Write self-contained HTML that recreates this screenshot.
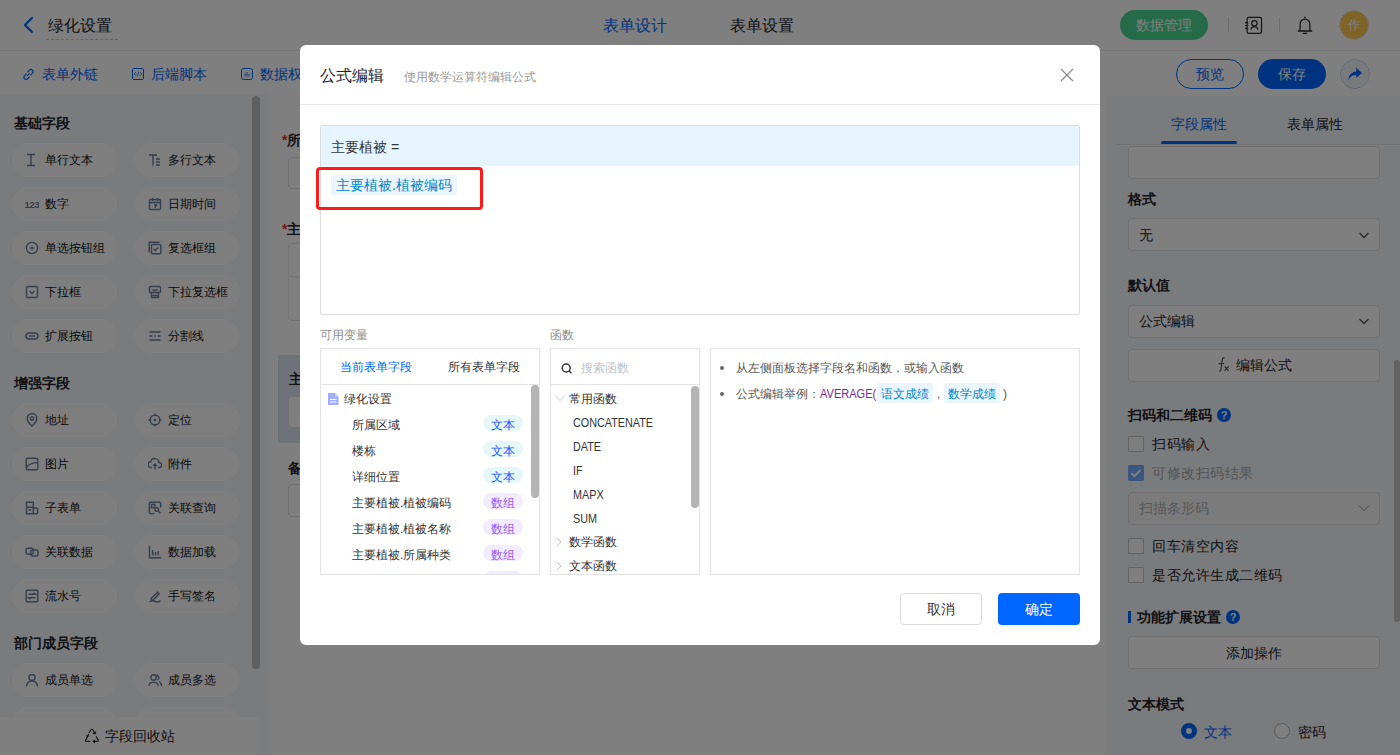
<!DOCTYPE html>
<html><head><meta charset="utf-8">
<style>
*{box-sizing:border-box;margin:0;padding:0}
html,body{width:1400px;height:755px;overflow:hidden}
body{position:relative;font-family:"Liberation Sans",sans-serif;color:#1f2329;background:#fff}
.a{position:absolute}
.t{position:absolute;white-space:nowrap;line-height:20px}
svg{display:block}
/* page */
#hdr{left:0;top:0;width:1400px;height:51px;background:#fff;border-bottom:1px solid #e8e8e8}
#tb{left:0;top:51px;width:1400px;height:44px;background:#fff}
#side{left:0;top:95px;width:268px;height:660px;background:#f5f7fb}
.sec{position:absolute;left:14px;font-size:14px;font-weight:bold;line-height:20px;color:#1f2329}
.pill{position:absolute;width:105px;height:34px;border-radius:17px;background:#fdfdfd}
.pill .ic{position:absolute;left:16px;top:11px;width:12px;height:12px}
.pill span{position:absolute;left:33px;top:8px;font-size:12px;line-height:18px;color:#111;white-space:nowrap}
#canvas{left:268px;top:95px;width:838px;height:660px;background:#fff}
#rp{left:1106px;top:96px;width:294px;height:659px;background:#f5f7fb}
.inp{position:absolute;left:1128px;width:252px;border:1px solid #e0e0e0;border-radius:4px;background:#fff}
.lbl{position:absolute;left:1128px;font-size:14px;font-weight:bold;line-height:20px;white-space:nowrap}
.cb{position:absolute;left:1128px;width:16px;height:16px;border:1px solid #c4c4c4;border-radius:1px;background:#fff}
.cbt{position:absolute;left:1152px;font-size:14px;line-height:20px;white-space:nowrap;letter-spacing:0.5px}
#mask{left:0;top:0;width:1400px;height:755px;background:rgba(0,0,0,0.5)}
/* modal */
#modal{left:300px;top:45px;width:800px;height:600px;background:#fff;border-radius:6px}
.tag{width:40px;height:16px;border-radius:8px;font-size:12px;line-height:20px;text-align:center;white-space:nowrap}
.fn{font-size:12px;color:#333;transform:scaleX(0.9);transform-origin:0 0}
</style></head><body>

<!-- header -->
<div id="hdr" class="a"></div>
<svg class="a" style="left:20px;top:15px" width="16" height="20" viewBox="0 0 16 20"><polyline points="12,3 5,10 12,17" fill="none" stroke="#0066ff" stroke-width="2.2" stroke-linecap="round" stroke-linejoin="round"/></svg>
<div class="t" style="left:48px;top:16px;font-size:16px">绿化设置</div>
<div class="a" style="left:46px;top:39px;width:72px;height:0;border-top:1px dashed #c9c9c9"></div>
<div class="t" style="left:603px;top:16px;font-size:16px;color:#0066ff">表单设计</div>
<div class="t" style="left:730px;top:16px;font-size:16px">表单设置</div>
<div class="a" style="left:1120px;top:10px;width:88px;height:30px;border-radius:15px;background:#4ad692"></div>
<div class="t" style="left:1136px;top:15px;font-size:14px;color:#fff">数据管理</div>
<div class="a" style="left:1228px;top:18px;width:1px;height:14px;background:#dcdcdc"></div>
<svg class="a" style="left:1243px;top:15px" width="20" height="20" viewBox="0 0 20 20"><rect x="4.1" y="2.4" width="14.4" height="16" rx="1.6" fill="none" stroke="#2a2a2a" stroke-width="1.25"/><circle cx="11.4" cy="8.3" r="2.7" fill="none" stroke="#2a2a2a" stroke-width="1.25"/><path d="M7.9 14.6a3.6 3.6 0 0 1 7.1 0" fill="none" stroke="#2a2a2a" stroke-width="1.25"/><path d="M1.9 7.6h3.4M1.9 10.5h3.4M1.9 13.3h3.4" stroke="#2a2a2a" stroke-width="1.1"/></svg>
<div class="a" style="left:1279px;top:18px;width:1px;height:14px;background:#dcdcdc"></div>
<svg class="a" style="left:1295px;top:15px" width="20" height="20" viewBox="0 0 20 20"><path d="M4.6 16c.4-.6.5-1.4.5-2.4V8.9a4.9 4.9 0 0 1 9.8 0v4.7c0 1 .1 1.8.5 2.4" fill="none" stroke="#2a2a2a" stroke-width="1.25"/><path d="M3.3 16h13.4" stroke="#2a2a2a" stroke-width="1.4" stroke-linecap="round"/><path d="M8.4 18.4h3.2" stroke="#2a2a2a" stroke-width="1.3" stroke-linecap="round"/><circle cx="10" cy="2.6" r="0.9" fill="#2a2a2a"/></svg>
<div class="a" style="left:1339px;top:10px;width:30px;height:30px;border-radius:15px;background:#fcc84c;border:1px solid #e6e9f4"></div>
<div class="t" style="left:1348px;top:15px;font-size:12px;color:#fff">作</div>

<!-- toolbar -->
<div id="tb" class="a"></div>
<svg class="a" style="left:22px;top:68px" width="13" height="13" viewBox="0 0 13 13"><path d="M5.6 7.4l1.8-1.8M4.2 6.2L2.6 7.8a2.1 2.1 0 0 0 3 3l1.6-1.6M8.8 6.8l1.6-1.6a2.1 2.1 0 0 0-3-3L5.8 3.8" fill="none" stroke="#0066ff" stroke-width="1.2" stroke-linecap="round"/></svg>
<div class="t" style="left:42px;top:64px;font-size:14px;color:#0066ff">表单外链</div>
<svg class="a" style="left:132px;top:68px" width="12" height="12" viewBox="0 0 12 12"><rect x="0.5" y="0.5" width="11" height="11" rx="1.3" fill="none" stroke="#0066ff" stroke-width="1"/><path d="M3.8 4.2L2.3 6l1.5 1.8M8.2 4.2L9.7 6 8.2 7.8M6.8 3.6L5.2 8.4" fill="none" stroke="#0066ff" stroke-width="0.8"/></svg>
<div class="t" style="left:151px;top:64px;font-size:14px;color:#0066ff">后端脚本</div>
<svg class="a" style="left:241px;top:68px" width="12" height="12" viewBox="0 0 12 12"><rect x="0.5" y="0.5" width="11" height="11" rx="2" fill="none" stroke="#0066ff" stroke-width="1"/><path d="M4 5.5v3M6 4v4.5M8 6v2.5" stroke="#0066ff" stroke-width="0.9"/></svg>
<div class="t" style="left:260px;top:64px;font-size:14px;color:#0066ff">数据权限</div>
<div class="a" style="left:1176px;top:59px;width:68px;height:30px;border-radius:15px;border:1px solid #0066ff;background:#fff"></div>
<div class="t" style="left:1196px;top:64px;font-size:14px;color:#0066ff">预览</div>
<div class="a" style="left:1258px;top:59px;width:68px;height:30px;border-radius:15px;background:#0066ff"></div>
<div class="t" style="left:1278px;top:64px;font-size:14px;color:#fff">保存</div>
<div class="a" style="left:1340px;top:59px;width:30px;height:30px;border-radius:15px;border:1px solid #c9d5ee;background:#f2f5fc"></div>
<svg class="a" style="left:1347px;top:66px" width="16" height="16" viewBox="0 0 16 16"><path d="M9.2 1.8l5.8 5.2-5.8 5.1V9.1C5.6 9.1 3.2 10.5 1.2 14.2c0.5-4.8 3.1-8.3 8-8.8z" fill="#0066ff"/></svg>

<div id="side" class="a"></div>
<div class="sec" style="top:113px">基础字段</div>
<div class="sec" style="top:373px">增强字段</div>
<div class="sec" style="top:633px">部门成员字段</div>
<div class="pill" style="left:12px;top:143px"><svg class="ic" style="left:13px;top:10px;width:14px;height:14px" viewBox="0 0 14 14"><path d="M2 1.5h8M2 12.5h8M6 1.5v11" stroke="#6c7a9a" stroke-width="1.4" fill="none"/></svg><span>单行文本</span></div>
<div class="pill" style="left:135px;top:143px"><svg class="ic" style="left:13px;top:10px;width:14px;height:14px" viewBox="0 0 14 14"><path d="M1 2h8M5 2v10.5M8 6h4M8 9h4M8 12h4" stroke="#6c7a9a" stroke-width="1.4" fill="none"/></svg><span>多行文本</span></div>
<div class="pill" style="left:12px;top:187px"><svg class="ic" style="left:13px;top:10px;width:14px;height:14px" viewBox="0 0 14 14"><text x="-0.5" y="10.5" font-size="9.5" font-weight="bold" fill="#6c7a9a" font-family="Liberation Sans" letter-spacing="-0.3">123</text></svg><span>数字</span></div>
<div class="pill" style="left:135px;top:187px"><svg class="ic" style="left:13px;top:10px;width:14px;height:14px" viewBox="0 0 14 14"><rect x="1.5" y="2.5" width="11" height="10" rx="1" stroke="#6c7a9a" stroke-width="1.4" fill="none"/><path d="M1.5 5.5h11M4.5 1v3M9.5 1v3M6 8h2.5L7 11" stroke="#6c7a9a" stroke-width="1.4" fill="none"/></svg><span>日期时间</span></div>
<div class="pill" style="left:12px;top:231px"><svg class="ic" style="left:13px;top:10px;width:14px;height:14px" viewBox="0 0 14 14"><circle cx="7" cy="7" r="5.6" stroke="#6c7a9a" stroke-width="1.4" fill="none"/><circle cx="7" cy="7" r="1.6" fill="#6c7a9a"/></svg><span>单选按钮组</span></div>
<div class="pill" style="left:135px;top:231px"><svg class="ic" style="left:13px;top:10px;width:14px;height:14px" viewBox="0 0 14 14"><path d="M1.2 11.5V1.2h10.3" stroke="#6c7a9a" stroke-width="1.4" fill="none"/><rect x="3.5" y="3.5" width="9.3" height="9.3" rx="1" stroke="#6c7a9a" stroke-width="1.4" fill="none"/><path d="M5.6 8l1.6 1.6 3-3.2" stroke="#6c7a9a" stroke-width="1.4" fill="none"/></svg><span>复选框组</span></div>
<div class="pill" style="left:12px;top:275px"><svg class="ic" style="left:13px;top:10px;width:14px;height:14px" viewBox="0 0 14 14"><rect x="1.5" y="1.5" width="11" height="11" rx="1" stroke="#6c7a9a" stroke-width="1.4" fill="none"/><path d="M4.5 6l2.5 2.5L9.5 6" stroke="#6c7a9a" stroke-width="1.4" fill="none"/></svg><span>下拉框</span></div>
<div class="pill" style="left:135px;top:275px"><svg class="ic" style="left:13px;top:10px;width:14px;height:14px" viewBox="0 0 14 14"><rect x="1.5" y="1.5" width="11" height="6" rx="1" stroke="#6c7a9a" stroke-width="1.4" fill="none"/><path d="M3 10.5h8M4.5 4.5l2.5 1.2 2.5-1.2M3.5 7.5v5h7v-5" stroke="#6c7a9a" stroke-width="1.4" fill="none"/></svg><span>下拉复选框</span></div>
<div class="pill" style="left:12px;top:319px"><svg class="ic" style="left:13px;top:10px;width:14px;height:14px" viewBox="0 0 14 14"><rect x="1" y="4" width="12" height="6" rx="3" stroke="#6c7a9a" stroke-width="1.4" fill="none"/><path d="M4 7h6" stroke="#6c7a9a" stroke-width="1.4" fill="none"/></svg><span>扩展按钮</span></div>
<div class="pill" style="left:135px;top:319px"><svg class="ic" style="left:13px;top:10px;width:14px;height:14px" viewBox="0 0 14 14"><path d="M1.5 3h11M1.5 7h3M6 7h2M9.5 7h3M1.5 11h11" stroke="#6c7a9a" stroke-width="1.4" fill="none"/></svg><span>分割线</span></div>
<div class="pill" style="left:12px;top:403px"><svg class="ic" style="left:13px;top:10px;width:14px;height:14px" viewBox="0 0 14 14"><path d="M7 13s-4.8-4.3-4.8-7.6a4.8 4.8 0 0 1 9.6 0C11.8 8.7 7 13 7 13z" stroke="#6c7a9a" stroke-width="1.4" fill="none"/><circle cx="7" cy="5.6" r="1.7" stroke="#6c7a9a" stroke-width="1.4" fill="none"/></svg><span>地址</span></div>
<div class="pill" style="left:135px;top:403px"><svg class="ic" style="left:13px;top:10px;width:14px;height:14px" viewBox="0 0 14 14"><circle cx="7" cy="7" r="4.8" stroke="#6c7a9a" stroke-width="1.4" fill="none"/><circle cx="7" cy="7" r="1.3" fill="#6c7a9a"/><path d="M7 0.5v2.5M7 11v2.5M0.5 7H3M11 7h2.5" stroke="#6c7a9a" stroke-width="1.4" fill="none"/></svg><span>定位</span></div>
<div class="pill" style="left:12px;top:447px"><svg class="ic" style="left:13px;top:10px;width:14px;height:14px" viewBox="0 0 14 14"><rect x="1.2" y="1.2" width="11.6" height="11.6" rx="1.4" stroke="#6c7a9a" stroke-width="1.4" fill="none"/><path d="M1.4 10.2C4 7 6.6 5.6 12.6 5.6" stroke="#6c7a9a" stroke-width="1.4" fill="none"/></svg><span>图片</span></div>
<div class="pill" style="left:135px;top:447px"><svg class="ic" style="left:13px;top:10px;width:14px;height:14px" viewBox="0 0 14 14"><path d="M3.8 10.5H3a2.8 2.8 0 0 1-.3-5.6 4.2 4.2 0 0 1 8.3.6 2.5 2.5 0 0 1 .2 5H10M7 12.5V7.2M5 9l2-2 2 2" stroke="#6c7a9a" stroke-width="1.4" fill="none"/></svg><span>附件</span></div>
<div class="pill" style="left:12px;top:491px"><svg class="ic" style="left:13px;top:10px;width:14px;height:14px" viewBox="0 0 14 14"><path d="M1.5 1.2h6.8v11.6H1.5zM1.5 6.3h6.8M3.6 9h2.6M8.3 7h3.3a1 1 0 0 1 1 1v3.8a1 1 0 0 1-1 1H8.3" stroke="#6c7a9a" stroke-width="1.4" fill="none"/></svg><span>子表单</span></div>
<div class="pill" style="left:135px;top:491px"><svg class="ic" style="left:13px;top:10px;width:14px;height:14px" viewBox="0 0 14 14"><path d="M12.6 6.5V2.2a1 1 0 0 0-1-1H2.4a1 1 0 0 0-1 1v9.4a1 1 0 0 0 1 1h4" stroke="#6c7a9a" stroke-width="1.4" fill="none"/><rect x="3.6" y="3.4" width="3.2" height="3.2" stroke="#6c7a9a" stroke-width="1.4" fill="none"/><circle cx="8.8" cy="8.6" r="1.8" stroke="#6c7a9a" stroke-width="1.4" fill="none"/><path d="M10.1 9.9l2.4 2.4" stroke="#6c7a9a" stroke-width="1.4" fill="none"/></svg><span>关联查询</span></div>
<div class="pill" style="left:12px;top:535px"><svg class="ic" style="left:13px;top:10px;width:14px;height:14px" viewBox="0 0 14 14"><rect x="1" y="3.2" width="7.2" height="6" rx="1.6" stroke="#6c7a9a" stroke-width="1.4" fill="none"/><rect x="5.8" y="5" width="7.2" height="6" rx="1.6" stroke="#6c7a9a" stroke-width="1.4" fill="none"/></svg><span>关联数据</span></div>
<div class="pill" style="left:135px;top:535px"><svg class="ic" style="left:13px;top:10px;width:14px;height:14px" viewBox="0 0 14 14"><path d="M1.5 0.8v12h11.8M4.6 10.5V5M7.4 10.5V7M10.2 10.5V6" stroke="#6c7a9a" stroke-width="1.4" fill="none"/></svg><span>数据加载</span></div>
<div class="pill" style="left:12px;top:579px"><svg class="ic" style="left:13px;top:10px;width:14px;height:14px" viewBox="0 0 14 14"><rect x="1.2" y="1.2" width="11.6" height="11.6" rx="1" stroke="#6c7a9a" stroke-width="1.4" fill="none"/><path d="M3.6 5.3h6.8L8.6 3.8M10.4 8.7H3.6l1.8 1.5" stroke="#6c7a9a" stroke-width="1.4" fill="none"/></svg><span>流水号</span></div>
<div class="pill" style="left:135px;top:579px"><svg class="ic" style="left:13px;top:10px;width:14px;height:14px" viewBox="0 0 14 14"><path d="M3.2 9.6L9.6 3.2l1.6 1.6-6.4 6.4H3.2z" stroke="#6c7a9a" stroke-width="1.4" fill="none"/><path d="M1.5 13c2-1.4 3.8-1.6 5.6-.6 1.6.9 3.4.7 5.4-.6" stroke="#6c7a9a" stroke-width="1.4" fill="none"/></svg><span>手写签名</span></div>
<div class="pill" style="left:12px;top:663px"><svg class="ic" style="left:13px;top:10px;width:14px;height:14px" viewBox="0 0 14 14"><circle cx="7" cy="4.5" r="3" stroke="#6c7a9a" stroke-width="1.4" fill="none"/><path d="M1.5 13.5a5.5 5.5 0 0 1 11 0" stroke="#6c7a9a" stroke-width="1.4" fill="none"/></svg><span>成员单选</span></div>
<div class="pill" style="left:135px;top:663px"><svg class="ic" style="left:13px;top:10px;width:14px;height:14px" viewBox="0 0 14 14"><circle cx="5.5" cy="4.5" r="2.7" stroke="#6c7a9a" stroke-width="1.4" fill="none"/><path d="M0.8 13a4.8 4.8 0 0 1 9.4 0M8.5 2a2.7 2.7 0 0 1 1 5M11 8.5a4.8 4.8 0 0 1 2.4 4.5" stroke="#6c7a9a" stroke-width="1.4" fill="none"/></svg><span>成员多选</span></div>
<div class="pill" style="left:12px;top:707px"><svg class="ic" style="left:13px;top:10px;width:14px;height:14px" viewBox="0 0 14 14"></svg><span>成员部门</span></div>
<div class="pill" style="left:135px;top:707px"></div>
<div class="a" style="left:252px;top:96px;width:8px;height:573px;border-radius:4px;background:#bebebe"></div>
<div class="a" style="left:0;top:717px;width:260px;height:38px;background:#fff"></div>
<svg class="a" style="left:84px;top:728px" width="16" height="16" viewBox="0 0 16 16"><g fill="none" stroke="#222" stroke-width="1.15" stroke-linecap="round" stroke-linejoin="round"><path d="M5.1 4.6L7 1.8Q7.9 0.7 8.8 1.8L10.9 5.6M9.2 5.5l1.8.3.6-1.7"/><path d="M4 8.3L1.6 12Q1 13.4 2.4 13.4H5.9M2.5 7.9l1.6.3.4-1.7"/><path d="M9.2 13.4H13.4Q14.8 13.4 14.2 12L12.2 8.7M10.5 12.1L9.2 13.4l1.3 1.3"/></g></svg>
<div class="t" style="left:105px;top:726px;font-size:14px">字段回收站</div>
<div id="canvas" class="a"></div>
<div class="t" style="left:282px;top:130px;font-size:14px;font-weight:bold"><span style="color:#e03030">*</span>所属区域</div>
<div class="a" style="left:288px;top:157px;width:300px;height:32px;border:1px solid #e0e0e0;border-radius:4px"></div>
<div class="t" style="left:282px;top:219px;font-size:14px;font-weight:bold"><span style="color:#e03030">*</span>主要植被</div>
<div class="a" style="left:288px;top:243px;width:300px;height:78px;border:1px solid #e8e8e8;border-radius:4px"></div>
<div class="a" style="left:288px;top:276px;width:300px;height:1px;background:#e8e8e8"></div>
<div class="a" style="left:278px;top:355px;width:400px;height:88px;background:#dfe6f3"></div>
<div class="t" style="left:289px;top:369px;font-size:14px;font-weight:bold">主要植被</div>
<div class="a" style="left:288px;top:396px;width:300px;height:32px;border:1px solid #e0e0e0;border-radius:4px;background:#fff"></div>
<div class="t" style="left:288px;top:458px;font-size:14px;font-weight:bold">备注</div>
<div class="a" style="left:288px;top:484px;width:300px;height:33px;border:1px solid #e0e0e0;border-radius:4px"></div>

<div id="rp" class="a"></div>
<div class="t" style="left:1171px;top:114px;font-size:14px;color:#0066ff">字段属性</div>
<div class="t" style="left:1287px;top:114px;font-size:14px">表单属性</div>
<div class="a" style="left:1114px;top:144px;width:286px;height:1px;background:#e4e4e4"></div>
<div class="a" style="left:1161px;top:141px;width:76px;height:3px;border-radius:1.5px;background:#0066ff"></div>
<div class="inp" style="top:146px;height:33px"></div>
<div class="lbl" style="top:189px">格式</div>
<div class="inp" style="top:218px;height:33px"></div>
<div class="t" style="left:1139px;top:225px;font-size:14px">无</div>
<svg class="a" style="left:1358px;top:229px" width="12" height="12" viewBox="0 0 12 12"><path d="M1.5 4l4.5 4.5L10.5 4" fill="none" stroke="#555" stroke-width="1.3"/></svg>
<div class="lbl" style="top:275px">默认值</div>
<div class="inp" style="top:305px;height:33px"></div>
<div class="t" style="left:1139px;top:311px;font-size:14px">公式编辑</div>
<svg class="a" style="left:1358px;top:315px" width="12" height="12" viewBox="0 0 12 12"><path d="M1.5 4l4.5 4.5L10.5 4" fill="none" stroke="#555" stroke-width="1.3"/></svg>
<div class="inp" style="top:349px;height:33px"></div>
<svg class="a" style="left:1216px;top:356px" width="16" height="17" viewBox="0 0 16 17"><path d="M8.6 2.2c-.6-.5-1.5-.4-1.9.4-.4.8-.6 2-.9 4.2L4.9 13.6c-.3 1.3-.8 1.7-1.6 1.5" fill="none" stroke="#4a4a4a" stroke-width="1.1"/><path d="M2.5 7.6h5.6" stroke="#4a4a4a" stroke-width="1"/><path d="M8.6 10.3l4 4.6M12.6 10.3l-4 4.6" stroke="#4a4a4a" stroke-width="1.1"/></svg>
<div class="t" style="left:1236px;top:355px;font-size:14px">编辑公式</div>
<div class="lbl" style="top:405px">扫码和二维码</div>
<div class="a" style="left:1217px;top:408px;width:14px;height:14px;border-radius:7px;background:#0066ff;color:#fff;font-size:11px;font-weight:bold;line-height:14px;text-align:center">?</div>
<div class="cb" style="top:436px"></div>
<div class="cbt" style="top:434px">扫码输入</div>
<div class="cb" style="top:465px;background:#74b0ff;border-color:#74b0ff"></div>
<svg class="a" style="left:1128px;top:465px" width="16" height="16" viewBox="0 0 16 16"><path d="M3.4 8.2l3 3 6-6.2" fill="none" stroke="#fff" stroke-width="2"/></svg>
<div class="cbt" style="top:463px;color:#a8a8a8">可修改扫码结果</div>
<div class="inp" style="top:492px;height:33px;background:#f7f7f8"></div>
<div class="t" style="left:1139px;top:498px;font-size:14px;color:#b0b0b0">扫描条形码</div>
<svg class="a" style="left:1358px;top:502px" width="12" height="12" viewBox="0 0 12 12"><path d="M1.5 4l4.5 4.5L10.5 4" fill="none" stroke="#bbb" stroke-width="1.3"/></svg>
<div class="cb" style="top:538px"></div>
<div class="cbt" style="top:536px">回车清空内容</div>
<div class="cb" style="top:567px"></div>
<div class="cbt" style="top:565px">是否允许生成二维码</div>
<div class="a" style="left:1128px;top:611px;width:3px;height:12px;background:#0066ff"></div>
<div class="lbl" style="left:1137px;top:607px">功能扩展设置</div>
<div class="a" style="left:1226px;top:610px;width:14px;height:14px;border-radius:7px;background:#0066ff;color:#fff;font-size:11px;font-weight:bold;line-height:14px;text-align:center">?</div>
<div class="inp" style="top:636px;height:33px"></div>
<div class="t" style="left:1226px;top:643px;font-size:14px">添加操作</div>
<div class="lbl" style="top:694px">文本模式</div>
<div class="a" style="left:1181px;top:723px;width:16px;height:16px;border-radius:8px;border:5px solid #0066ff;background:#fff"></div>
<div class="t" style="left:1204px;top:722px;font-size:14px;color:#0066ff">文本</div>
<div class="a" style="left:1274px;top:723px;width:16px;height:16px;border-radius:8px;border:1px solid #b8b8b8;background:#fff"></div>
<div class="t" style="left:1298px;top:722px;font-size:14px">密码</div>
<div class="a" style="left:1394px;top:360px;width:6px;height:262px;border-radius:3px;background:#c6c6c6"></div>


<div id="mask" class="a"></div>
<div id="modal" class="a"></div>
<div class="t" style="left:320px;top:66px;font-size:16px">公式编辑</div>
<div class="t" style="left:404px;top:67px;font-size:12px;color:#999">使用数学运算符编辑公式</div>
<svg class="a" style="left:1060px;top:68px" width="14" height="14" viewBox="0 0 14 14"><path d="M1 1l12 12M13 1L1 13" stroke="#888" stroke-width="1.2"/></svg>
<div class="a" style="left:300px;top:104px;width:800px;height:1px;background:#e8e8e8"></div>
<div class="a" style="left:320px;top:125px;width:760px;height:190px;border:1px solid #dcdcdc;border-radius:2px"></div>
<div class="a" style="left:321px;top:126px;width:758px;height:40px;background:#e6f4ff"></div>
<div class="t" style="left:331px;top:137px;font-size:14px;color:#333">主要植被 =</div>
<div class="a" style="left:331px;top:175px;width:126px;height:20px;border-radius:2px;background:#eaf5fd"></div>
<div class="t" style="left:336px;top:175px;font-size:14px;color:#0088cc">主要植被.植被编码</div>
<div class="a" style="left:316px;top:167px;width:167px;height:43px;border:3px solid #ff1a1a;border-radius:4px"></div>
<div class="t" style="left:320px;top:325px;font-size:12px;color:#8c8c8c">可用变量</div>
<div class="t" style="left:550px;top:325px;font-size:12px;color:#8c8c8c">函数</div>
<div class="a" style="left:320px;top:348px;width:220px;height:227px;border:1px solid #e3e3e3;overflow:hidden"></div>
<div class="t" style="left:340px;top:357px;font-size:12px;color:#0066ff">当前表单字段</div>
<div class="t" style="left:448px;top:357px;font-size:12px;color:#333">所有表单字段</div>
<div class="a" style="left:321px;top:384px;width:218px;height:1px;background:#e3e3e3"></div>
<svg class="a" style="left:328px;top:393px" width="11" height="12" viewBox="0 0 11 12"><path d="M0 0h7l3.5 3.5V12H0z" fill="#a4acfc"/><path d="M7 0v3.5h3.5" fill="#d3d7fe"/><path d="M2 6.5h6.5M2 9h6.5" stroke="#fff" stroke-width="1"/></svg>
<div class="t" style="left:344px;top:389px;font-size:12px;color:#333">绿化设置</div>
<div class="a" style="left:321px;top:385px;width:218px;height:189px;overflow:hidden">
<div class="t" style="left:31px;top:30px;font-size:12px;color:#333">所属区域</div>
<div class="a tag" style="left:162px;top:30px;background:#e6f7f7;color:#1a5cff">文本</div>
<div class="t" style="left:31px;top:56px;font-size:12px;color:#333">楼栋</div>
<div class="a tag" style="left:162px;top:56px;background:#e6f7f7;color:#1a5cff">文本</div>
<div class="t" style="left:31px;top:82px;font-size:12px;color:#333">详细位置</div>
<div class="a tag" style="left:162px;top:82px;background:#e6f7f7;color:#1a5cff">文本</div>
<div class="t" style="left:31px;top:108px;font-size:12px;color:#333">主要植被.植被编码</div>
<div class="a tag" style="left:162px;top:108px;background:#f1ecff;color:#9a5cf5">数组</div>
<div class="t" style="left:31px;top:134px;font-size:12px;color:#333">主要植被.植被名称</div>
<div class="a tag" style="left:162px;top:134px;background:#f1ecff;color:#9a5cf5">数组</div>
<div class="t" style="left:31px;top:160px;font-size:12px;color:#333">主要植被.所属种类</div>
<div class="a tag" style="left:162px;top:160px;background:#f1ecff;color:#9a5cf5">数组</div>
<div class="t" style="left:31px;top:186px;font-size:12px;color:#333">主要植被.种植日期</div>
<div class="a tag" style="left:162px;top:186px;background:#f1ecff;color:#9a5cf5">数组</div>
</div>
<div class="a" style="left:531px;top:385px;width:8px;height:113px;border-radius:4px;background:#b4b4b4"></div>
<div class="a" style="left:550px;top:348px;width:150px;height:227px;border:1px solid #e3e3e3"></div>
<svg class="a" style="left:561px;top:363px" width="12" height="11" viewBox="0 0 12 11"><circle cx="5.2" cy="5" r="4" fill="none" stroke="#333" stroke-width="1.5"/><path d="M8 7.8l2.4 2.4" stroke="#333" stroke-width="1.5"/></svg>
<div class="t" style="left:581px;top:358px;font-size:12px;color:#c0c4cc">搜索函数</div>
<div class="a" style="left:551px;top:384px;width:148px;height:1px;background:#e3e3e3"></div>
<svg class="a" style="left:554px;top:394px" width="12" height="9" viewBox="0 0 12 9"><path d="M1 1.5l5 5 5-5" fill="none" stroke="#c8c8c8" stroke-width="1"/></svg>
<div class="t" style="left:569px;top:389px;font-size:12px;color:#333">常用函数</div>
<div class="t fn" style="left:573px;top:412.5px">CONCATENATE</div>
<div class="t fn" style="left:573px;top:436.5px">DATE</div>
<div class="t fn" style="left:573px;top:460.5px">IF</div>
<div class="t fn" style="left:573px;top:484.5px">MAPX</div>
<div class="t fn" style="left:573px;top:508.5px">SUM</div>
<svg class="a" style="left:556px;top:537px" width="6" height="10" viewBox="0 0 6 10"><path d="M1 1l4 4-4 4" fill="none" stroke="#c0c0c0" stroke-width="1"/></svg>
<div class="t" style="left:569px;top:532px;font-size:12px;color:#333">数学函数</div>
<svg class="a" style="left:556px;top:561px" width="6" height="10" viewBox="0 0 6 10"><path d="M1 1l4 4-4 4" fill="none" stroke="#c0c0c0" stroke-width="1"/></svg>
<div class="a" style="left:551px;top:556px;width:148px;height:18px;overflow:hidden"><div class="t" style="left:18px;top:0px;font-size:12px;color:#333">文本函数</div></div>
<div class="a" style="left:691px;top:386px;width:8px;height:122px;border-radius:4px;background:#b4b4b4"></div>
<div class="a" style="left:710px;top:348px;width:370px;height:227px;border:1px solid #e3e3e3"></div>
<div class="a" style="left:720px;top:366px;width:4px;height:4px;border-radius:2px;background:#666"></div>
<div class="t" style="left:736px;top:358px;font-size:12px;color:#595959">从左侧面板选择字段名和函数，或输入函数</div>
<div class="a" style="left:720px;top:392px;width:4px;height:4px;border-radius:2px;background:#666"></div>
<div class="t" style="left:736px;top:384px;font-size:12px;color:#595959">公式编辑举例：</div>
<div class="t fn" style="left:820px;top:384px;color:#772c8f;transform:scaleX(0.92)">AVERAGE(</div>
<div class="a" style="left:877px;top:383px;width:56px;height:20px;border-radius:3px;background:#eaf5fd"></div>
<div class="t" style="left:881px;top:384px;font-size:12px;color:#0088cc">语文成绩</div>
<div class="t" style="left:937px;top:384px;font-size:12px;color:#595959">,</div>
<div class="a" style="left:944px;top:383px;width:56px;height:20px;border-radius:3px;background:#eaf5fd"></div>
<div class="t" style="left:948px;top:384px;font-size:12px;color:#0088cc">数学成绩</div>
<div class="t" style="left:1003px;top:384px;font-size:12px;color:#595959">)</div>
<div class="a" style="left:900px;top:593px;width:82px;height:32px;border:1px solid #d9d9d9;border-radius:4px;background:#fff"></div>
<div class="t" style="left:927px;top:599px;font-size:14px;color:#333">取消</div>
<div class="a" style="left:998px;top:593px;width:82px;height:32px;border-radius:4px;background:#0066ff"></div>
<div class="t" style="left:1025px;top:599px;font-size:14px;color:#fff">确定</div>

</body></html>
